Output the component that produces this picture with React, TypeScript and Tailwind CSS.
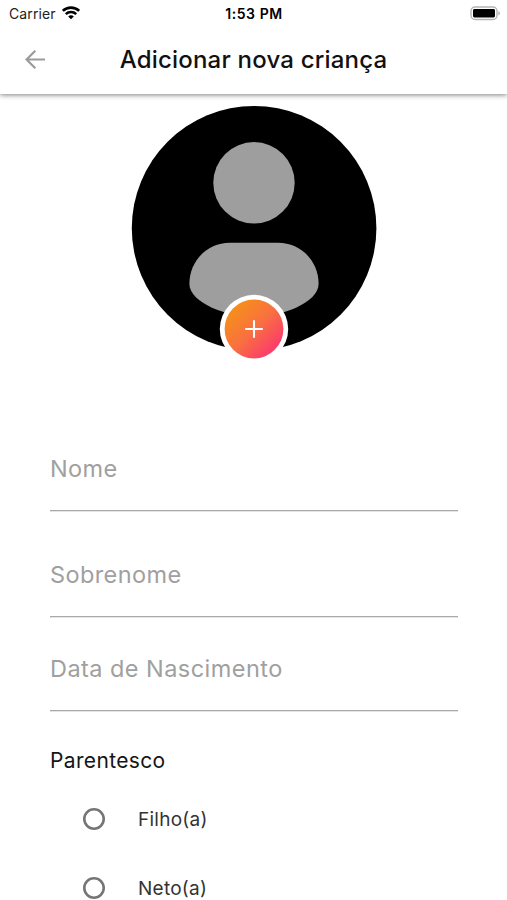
function StatusBar() {
  return (
    <div className="grid h-7 grid-cols-3 items-center pl-[9px] pr-[6px] text-black">
      <div className="flex items-center gap-[6px]">
        <span className="text-[14px] leading-7 tracking-[0.1px] text-[#222]">Carrier</span>
        <svg width="18" height="14" viewBox="0 0 18 14" fill="none" stroke="#000" className="-mt-[2px]">
          <path d="M.8 4.9C5.3 .5 12.7 .5 17.2 4.9" strokeWidth="2.7" />
          <path d="M3.8 8.1C6.6 5.3 11.4 5.3 14.2 8.1" strokeWidth="2.5" />
          <path d="M9 13.2L6.2 10.4C7.7 8.9 10.3 8.9 11.8 10.4Z" fill="#000" stroke="none" />
        </svg>
      </div>
      <span className="pr-[2px] text-center text-[14px] font-semibold leading-7 tracking-[0.55px] whitespace-nowrap">
        1:53 PM
      </span>
      <svg width="31" height="15" viewBox="0 0 31 15" className="-mt-[1px] justify-self-end">
        <rect x="1" y="1" width="26" height="12.5" rx="4" fill="#fff" stroke="#b4b4b4" strokeWidth="1.4" />
        <rect x="3" y="3" width="22" height="8.5" rx="1.4" fill="#000" />
        <path d="M28.3 5.2C30.5 5.8 30.5 8.7 28.3 9.3Z" fill="#b4b4b4" />
      </svg>
    </div>
  );
}

function Header() {
  return (
    <header className="h-[94px] bg-white shadow-[0_1px_5px_rgba(0,0,0,0.5)]">
      <StatusBar />
      <div className="grid h-[64px] grid-cols-[72px_1fr_72px] items-center">
        <svg width="20" height="20" viewBox="0 0 20 20" fill="none" stroke="#9b9b9b" strokeWidth="2.2" className="ml-[25px]">
          <path d="M20 9.5H1.8M10.3 .8L1.6 9.5L10.3 18.2" />
        </svg>
        <h1 className="text-center text-[24px] font-medium leading-8 tracking-[0.2px] whitespace-nowrap text-[#111]">
          Adicionar nova criança
        </h1>
      </div>
    </header>
  );
}

function Avatar() {
  return (
    <svg width="246" height="260" viewBox="131 105 246 260" className="mx-auto mt-[11px] block">
      <defs>
        <linearGradient id="badge" x1="0.1" y1="0.1" x2="0.9" y2="0.9">
          <stop offset="0.12" stopColor="#f68b1f" />
          <stop offset="0.5" stopColor="#f97040" />
          <stop offset="0.9" stopColor="#fb4068" />
        </linearGradient>
      </defs>
      <circle cx="254.1" cy="228.2" r="122.3" fill="#000" />
      <circle cx="254" cy="182.8" r="40.7" fill="#9e9e9e" />
      <path
        d="M230 242.8H278C301 242.8 318.6 261 318.6 284C318.6 303 280 317 254 317C228 317 189.4 303 189.4 284C189.4 261 207 242.8 230 242.8Z"
        fill="#9e9e9e"
      />
      <circle cx="254" cy="329" r="34.2" fill="#fff" />
      <circle cx="254" cy="329" r="29.4" fill="url(#badge)" />
      <path d="M245.2 329H262.8M254 320.2V337.8" stroke="#fff" strokeWidth="2.1" />
    </svg>
  );
}

function Field({ label, className }: { label: string; className: string }) {
  return (
    <div
      className={`h-[57px] border-b border-[#aaa] text-[23.5px] leading-[30px] text-[#a0a0a0] shadow-[0_1px_0_#e4e4e4] ${className}`}
    >
      {label}
    </div>
  );
}

function RadioOption({ label }: { label: string }) {
  return (
    <label className="flex h-[68.5px] items-center pl-[33px]">
      <span className="size-[22px] rounded-full shadow-[inset_0_0_0_2.6px_#757575]" />
      <span className="ml-[33px] pt-[2px] text-[19px] leading-6 tracking-[0.25px] text-[#333]">{label}</span>
    </label>
  );
}

export default function App() {
  return (
    <div className="h-[900px] overflow-hidden bg-white font-['Inter',sans-serif]">
      <Header />
      <Avatar />
      <main className="ml-[50px] mr-[49px] mt-[89px]">
        <Field label="Nome" className="tracking-[0.4px]" />
        <Field label="Sobrenome" className="mt-[49px] tracking-[0.4px]" />
        <Field label="Data de Nascimento" className="mt-[37px] tracking-[0.45px]" />
        <h2 className="mt-[35px] text-[21px] leading-[30px] tracking-[0.35px] text-[#151515]">Parentesco</h2>
        <div className="mt-[9px]">
          <RadioOption label="Filho(a)" />
          <RadioOption label="Neto(a)" />
        </div>
      </main>
    </div>
  );
}
